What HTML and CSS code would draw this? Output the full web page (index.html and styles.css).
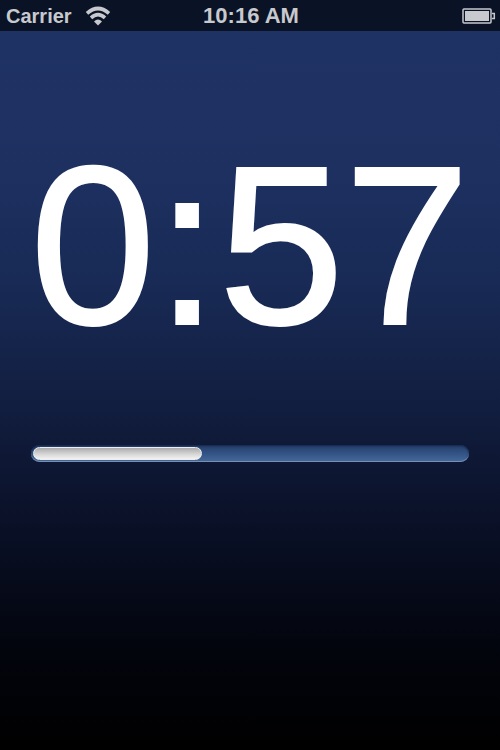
FILE: index.html
```html
<!DOCTYPE html>
<html lang="en">
<head>
  <meta charset="utf-8">
  <meta name="viewport" content="width=device-width, initial-scale=1">
  <title>Timer</title>
  <link rel="stylesheet" href="styles.css">
</head>
<body>
  <header class="status-bar">
    <div class="carrier">
      <span>Carrier</span>
      <svg class="wifi" width="26" height="20" viewBox="0 0 26 20" aria-hidden="true">
        <path d="M2 7.4 Q13 -2.4 24 7.4" />
        <path d="M6 11.9 Q13 5.5 20 11.9" />
        <path class="dot" d="M9 15.4 Q13 11.8 17 15.4 L13 19.4 Z" />
      </svg>
    </div>
    <div class="clock">10:16 AM</div>
    <div class="battery">
      <svg width="34" height="16" viewBox="0 0 34 16" aria-hidden="true">
        <rect class="shell" x="1" y="1" width="28" height="14" rx="1" />
        <rect class="charge" x="3" y="3" width="24" height="10" />
        <path class="shell" d="M30 5.5 H32.3 V10.5 H30" />
      </svg>
    </div>
  </header>
  <main class="timer">
    <div class="time" role="timer">0:57</div>
    <progress class="bar" value="39" max="100" aria-label="Time elapsed"></progress>
  </main>
</body>
</html>
```

FILE: styles.css
```css
* {
  box-sizing: border-box;
}
body {
  margin: 0;
  min-height: 100vh;
  display: flex;
  flex-direction: column;
  background: #000;
  color: #fff;
  font-family: "Liberation Sans", Arial, sans-serif;
}
.status-bar {
  display: grid;
  grid-template-columns: 1fr auto 1fr;
  align-items: center;
  height: 31px;
  padding: 0 4px 0 6px;
  background: #0a1325;
  color: #c8c9ce;
  font-size: 22px;
  line-height: 24px;
  font-weight: bold;
}
.carrier {
  display: flex;
  align-items: center;
  gap: 13px;
}
.carrier span {
  font-size: 20px;
}
.wifi path {
  fill: none;
  stroke: #c8c9ce;
  stroke-width: 3.6;
}
.wifi .dot {
  fill: #c8c9ce;
  stroke: none;
}
.battery {
  display: flex;
  justify-content: flex-end;
}
.battery .shell {
  fill: none;
  stroke: #c8c9ce;
  stroke-width: 1.5;
}
.battery .charge {
  fill: #c8c9ce;
}
.timer {
  flex: 1;
  display: flex;
  flex-direction: column;
  padding: 102px 31px 0;
  background: linear-gradient(#1f3264 0%, #1d3060 20%, #182a55 35%, #121e40 52%, #0a1128 68%, #03050e 85%, #000 100%);
}
.time {
  display: flex;
  justify-content: center;
  font-size: 226px;
  line-height: 226px;
  -webkit-text-stroke: 2px #fff;
}
/* progress track and fill */
.bar {
  appearance: none;
  display: block;
  width: 100%;
  height: 17px;
  margin-top: 86px;
  padding: 2px;
  border: none;
  border-radius: 9px;
  background: linear-gradient(#243d69, #35578a 60%, #466a9c);
  box-shadow: inset 0 1px 2px #14264a, inset 0 -1px 0 #8095b5;
}
.bar::-webkit-progress-bar {
  background: none;
}
.bar::-webkit-progress-value {
  border-radius: 7px;
  border: 1px solid #eee;
  background: linear-gradient(#aaa, #d2d2d2 50%, #f2f2f2);
}
```
